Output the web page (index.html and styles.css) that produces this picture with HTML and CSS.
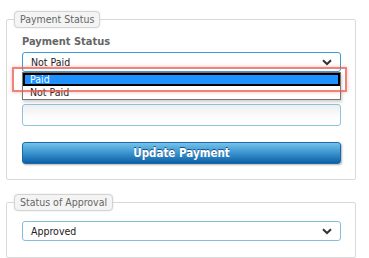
FILE: index.html
```html
<!DOCTYPE html>
<html lang="en">
<head>
  <meta charset="UTF-8" />
  <meta name="viewport" content="width=device-width, initial-scale=1.0" />
  <title>Payment Status</title>
  <link rel="stylesheet" href="styles.css">
</head>
<body>
  <div class="page">
    <fieldset class="box">
      <legend>Payment Status</legend>
      <div class="field-label">Payment Status</div>
      <div class="select-wrap">
        <div class="select focused">
          <span>Not Paid</span>
          <svg class="chev" width="10" height="7" viewBox="0 0 10 7"><path d="M1 1.2 L5 5 L9 1.2" fill="none" stroke="#333" stroke-width="2"/></svg>
        </div>
        <ul class="options">
          <li class="active">Paid</li>
          <li>Not Paid</li>
        </ul>
        <div class="callout"></div>
      </div>
      <div class="text-input"></div>
      <button class="btn">Update Payment</button>
    </fieldset>

    <fieldset class="box second">
      <legend>Status of Approval</legend>
      <div class="select">
        <span>Approved</span>
        <svg class="chev" width="10" height="7" viewBox="0 0 10 7"><path d="M1 1.2 L5 5 L9 1.2" fill="none" stroke="#333" stroke-width="2"/></svg>
      </div>
    </fieldset>
  </div>
</body>
</html>
```

FILE: styles.css
```css
body {
  margin: 0;
  background: #fff;
  font-family: "DejaVu Sans Condensed", "DejaVu Sans", sans-serif;
  color: #333;
}
.page {
  padding: 11px 0 0 6px;
}
.box {
  width: 350px;
  box-sizing: border-box;
  margin: 0;
  padding: 0 14px 15px 15px;
  border: 1px solid #d9d9d9;
  border-radius: 2px;
}
.box legend {
  margin-left: -8px;
  padding: 1px 5px 2px;
  font-size: 10.5px;
  color: #666;
  background: #f4f4f4;
  border: 1px solid #d3d3d3;
  border-radius: 4px;
  box-shadow: 0 0 2px rgba(0,0,0,0.12);
}
.second {
  margin-top: 14px;
  padding-top: 10px;
  padding-bottom: 16px;
}
.field-label {
  margin-top: 7px;
  font-weight: bold;
  font-size: 11px;
  color: #666;
}
.select-wrap {
  position: relative;
  margin-top: 4px;
}
.select {
  height: 20px;
  box-sizing: border-box;
  display: flex;
  align-items: center;
  justify-content: space-between;
  padding: 0 8px 0 8px;
  border: 1px solid #86bcdc;
  border-radius: 3px;
  font-size: 10.5px;
  color: #222;
  background: #fff;
}
.select.focused {
  border-color: #3d9bd6;
}
.chev {
  display: block;
}
.options {
  position: absolute;
  top: 20px;
  left: 0;
  right: 0;
  margin: 0;
  padding: 0;
  list-style: none;
  background: #fff;
  border: 1px solid #777;
  box-shadow: 1px 2px 3px rgba(0,0,0,0.2);
  font-size: 10.5px;
  z-index: 2;
}
.options li {
  height: 13px;
  line-height: 13px;
  padding-left: 7px;
  color: #222;
}
.options li.active {
  background: #1e90ff;
  color: #fff;
  outline: 2px solid #000;
  outline-offset: -2px;
  padding-left: 5px;
  border-left: 2px solid #000;
  border-right: 2px solid #000;
  box-sizing: content-box;
}
.callout {
  position: absolute;
  left: -10px;
  top: 15px;
  width: 335px;
  height: 25px;
  box-sizing: border-box;
  border: 2px solid rgba(232, 90, 80, 0.75);
  box-shadow: 0 0 4px rgba(232, 90, 80, 0.4);
  z-index: 3;
}
.text-input {
  margin-top: 32px;
  height: 22px;
  box-sizing: border-box;
  border: 1px solid #8ec3df;
  border-radius: 3px;
  background: linear-gradient(#eeeeee, #fdfdfd 60%);
}
.btn {
  display: block;
  width: 100%;
  height: 22px;
  margin-top: 16px;
  border: 1px solid #1a6aa8;
  border-radius: 3px;
  background: linear-gradient(#74c3ea, #3a94cf 50%, #0d5fa6);
  color: #fff;
  font-family: inherit;
  font-weight: bold;
  font-size: 11.5px;
  text-shadow: 0 -1px 0 #1b4d80;
  box-shadow: 1px 1px 2px rgba(0,0,0,0.3);
}
```
